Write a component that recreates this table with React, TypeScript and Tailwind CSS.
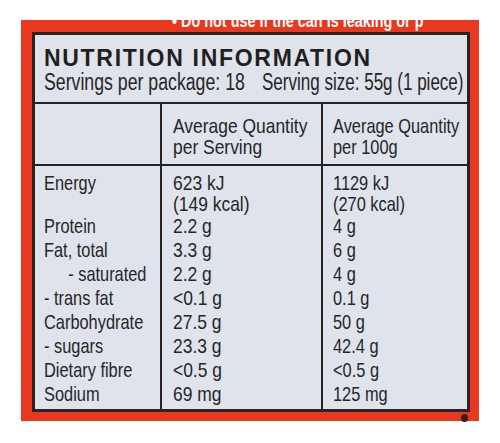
const rows: { label: string; indent?: boolean; serving: string[]; per100: string[] }[] = [
  { label: 'Energy', serving: ['623 kJ', '(149 kcal)'], per100: ['1129 kJ', '(270 kcal)'] },
  { label: 'Protein', serving: ['2.2 g'], per100: ['4 g'] },
  { label: 'Fat, total', serving: ['3.3 g'], per100: ['6 g'] },
  { label: '- saturated', indent: true, serving: ['2.2 g'], per100: ['4 g'] },
  { label: '- trans fat', serving: ['<0.1 g'], per100: ['0.1 g'] },
  { label: 'Carbohydrate', serving: ['27.5 g'], per100: ['50 g'] },
  { label: '- sugars', serving: ['23.3 g'], per100: ['42.4 g'] },
  { label: 'Dietary fibre', serving: ['<0.5 g'], per100: ['<0.5 g'] },
  { label: 'Sodium', serving: ['69 mg'], per100: ['125 mg'] },
];

const body = "font-['Liberation_Sans',Arial,sans-serif]";
const line = (n: number) => (n > 1 ? 'h-[42px] leading-[21px]' : 'h-[24px] leading-[24px]');

export default function App() {
  return (
    <div className="relative w-[500px] h-[443px] bg-white overflow-hidden">
      <div className="pt-[20px] px-[21px]">
        <div className="bg-[#e8381f] h-[401px] pl-[11px] pr-[9px] overflow-hidden">
          {/* warning text, cut off by the edge of the photo */}
          <div className="h-[12px] overflow-hidden flex items-end pl-[140px]">
            <div className={`${body} font-bold text-white text-[18px] leading-[17px] mb-[2px] whitespace-nowrap origin-left scale-x-[0.8]`}>
              • Do not use if the can is leaking or p
            </div>
          </div>

          <div className="border-[3px] border-[#2b2222] bg-[#dfe3eb] text-[#262626]">
            <div className="pl-[9px] pt-[11px] pb-[8px]">
              <div className={`${body} font-bold text-[23px] leading-[24px] tracking-[1.7px] text-[#231f1f]`}>
                NUTRITION INFORMATION
              </div>
              <div className={`${body} text-[23px] leading-[24px] whitespace-nowrap flex`}>
                <div className="w-[218px] origin-left scale-x-[0.77]">Servings per package: 18</div>
                <div className="origin-left scale-x-[0.74]">Serving size: 55g (1 piece)</div>
              </div>
            </div>

            <div className={`${body} text-[21px] border-t-2 border-[#2b2222] whitespace-nowrap`}>
              <div className="grid grid-cols-[127px_161px_1fr] border-b-2 border-[#2b2222]">
                <div className="border-r-2 border-[#2b2222]" />
                <div className="border-r-2 border-[#2b2222] pl-[11px] pt-[11px] pb-[7px] leading-[21px]">
                  <div className="origin-left scale-x-[0.83]">
                    <div>Average Quantity</div>
                    <div>per Serving</div>
                  </div>
                </div>
                <div className="pl-[10px] pt-[11px] pb-[7px] leading-[21px]">
                  <div className="origin-left scale-x-[0.78]">
                    <div>Average Quantity</div>
                    <div>per 100g</div>
                  </div>
                </div>
              </div>

              <div className="grid grid-cols-[127px_161px_1fr]">
                <div className="border-r-2 border-[#2b2222] pl-[9px] pt-[6px] pb-[3px]">
                  <div className="origin-left scale-x-[0.78]">
                    {rows.map((r) => (
                      <div key={r.label} className={`${line(r.serving.length)} ${r.indent ? 'pl-[31px]' : ''}`}>
                        {r.label}
                      </div>
                    ))}
                  </div>
                </div>
                <div className="border-r-2 border-[#2b2222] pl-[11px] pt-[6px] pb-[3px]">
                  <div className="origin-left scale-x-[0.83]">
                    {rows.map((r) => (
                      <div key={r.label} className={line(r.serving.length)}>
                        {r.serving.map((v) => (
                          <div key={v}>{v}</div>
                        ))}
                      </div>
                    ))}
                  </div>
                </div>
                <div className="pl-[10px] pt-[6px] pb-[3px]">
                  <div className="origin-left scale-x-[0.78]">
                    {rows.map((r) => (
                      <div key={r.label} className={line(r.per100.length)}>
                        {r.per100.map((v) => (
                          <div key={v}>{v}</div>
                        ))}
                      </div>
                    ))}
                  </div>
                </div>
              </div>
            </div>
          </div>
        </div>
      </div>
      <div className="absolute left-[461px] top-[414px] w-[7px] h-[8px] rounded-full bg-[#3a1d1a]" />
    </div>
  );
}
